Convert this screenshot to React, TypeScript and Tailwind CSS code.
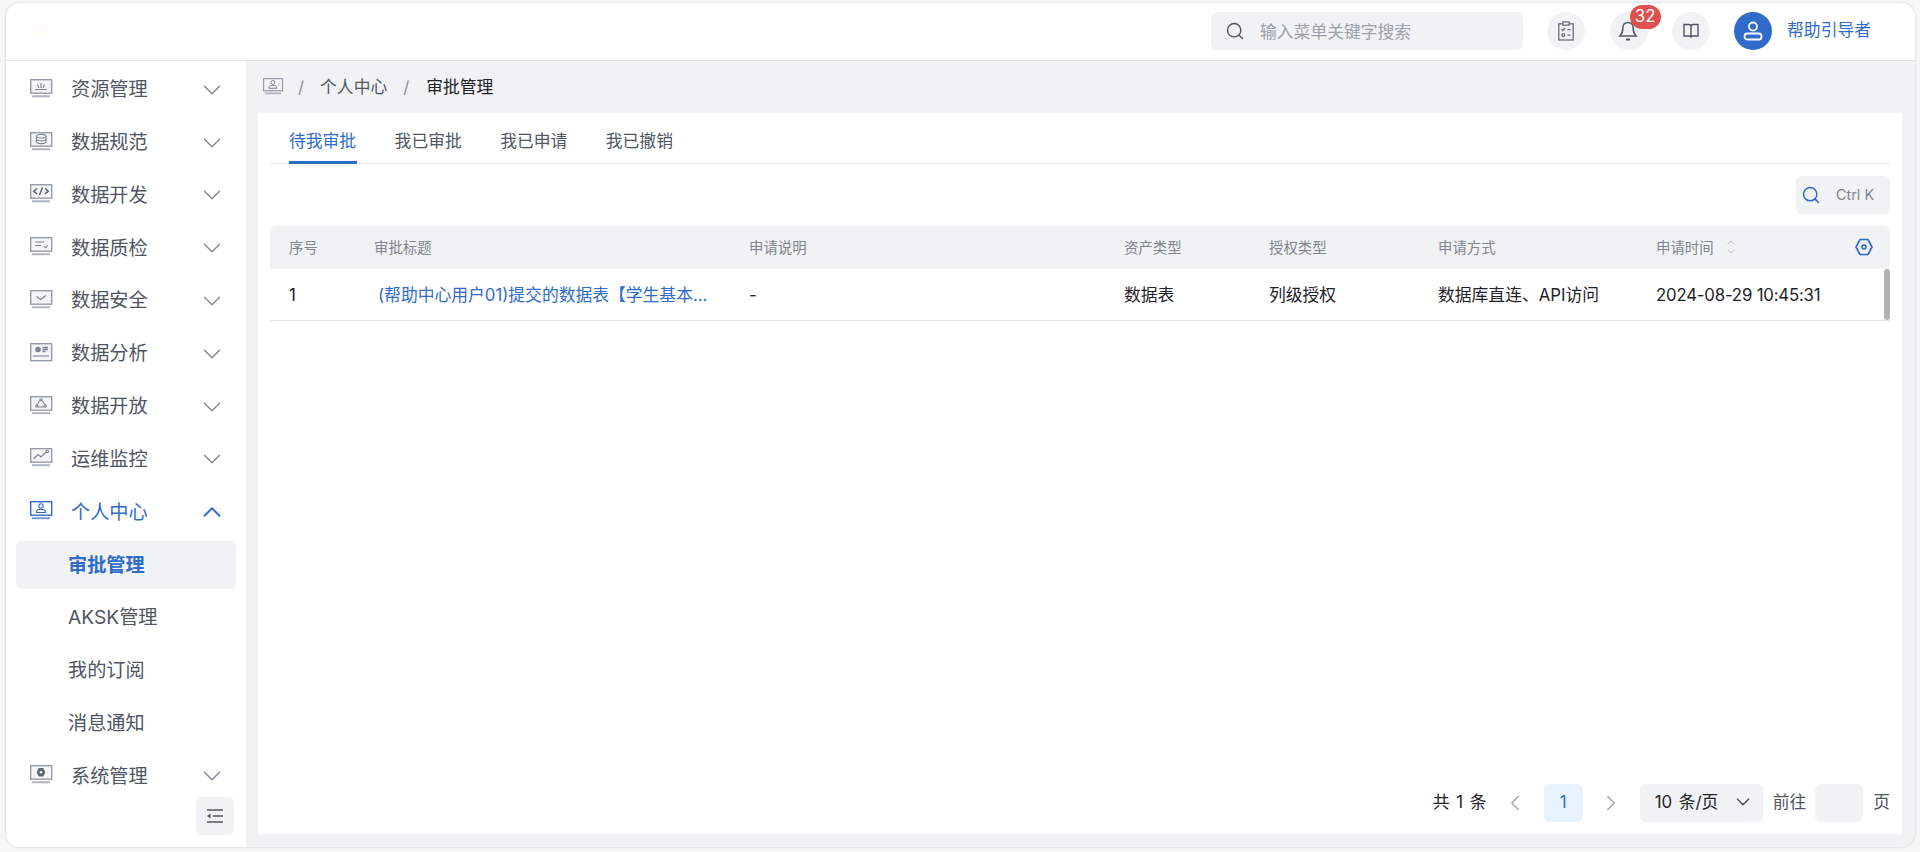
import React from "react";
import { ChevronDown, ChevronLeft, ChevronRight, ChevronUp, Search } from "lucide-react";

const font = "[font-family:Inter,'Noto_Sans_CJK_SC',sans-serif]";

// every nav icon is the same little monitor with a different glyph on the screen
const Screen = ({ children, active, tall }: { children?: React.ReactNode; active?: boolean; tall?: boolean }) => (
	<svg width="23" height="19" viewBox="0 0 23 19" fill="none" stroke={active ? "#2f6bc9" : "#969daa"} strokeWidth="1.4">
		<rect x="0.7" y="0.7" width="21" height={tall ? 17 : 13.5} fill={active ? "#fff" : "#f4f5f6"} />
		{tall ? (
			<path d="M3 13h16" strokeWidth="1.4" />
		) : (
			<path d="M2 17.2h18" strokeWidth="2" stroke={active ? "#6f9bdc" : "#b0b5bf"} />
		)}
		<g strokeWidth="1.1" stroke={active ? "#2f6bc9" : "#7b8494"}>{children}</g>
	</svg>
);

const UserGlyph = () => (
	<>
		<circle cx="11" cy="5" r="2.2" />
		<path d="M6.5 11.5c0-2 1.5-3 2.5-3h4c1 0 2.5 1 2.5 3z" />
	</>
);

const icons: Record<string, React.ReactNode> = {
	res: (
		<Screen>
			<path d="M5 10.5h12M11 4v5M7.5 5.5l1.5 3.5M14.5 5.5L13 9" />
		</Screen>
	),
	spec: (
		<Screen>
			<ellipse cx="11.2" cy="4.2" rx="4.8" ry="1.8" />
			<path d="M6.4 4.2v5.6c0 1 2.2 1.8 4.8 1.8s4.8-.8 4.8-1.8V4.2M6.4 7c0 1 2.2 1.8 4.8 1.8S16 8 16 7" />
		</Screen>
	),
	dev: (
		<Screen>
			<path d="M7 4.5L3.8 7.2 7 10M15 4.5l3.2 2.7L15 10M12.5 3.5l-3 7.5" strokeWidth="1.6" stroke="#5f6775" />
		</Screen>
	),
	check: (
		<Screen>
			<path d="M5 5h9M5 8.5h6M14 9.5l1.5 1.3 2.2-2.5" />
		</Screen>
	),
	safe: (
		<Screen>
			<path d="M6.5 6.5l4 3 5.5-4" strokeWidth="1.4" />
		</Screen>
	),
	chart: (
		<Screen tall>
			<circle cx="8" cy="6.5" r="2.8" fill="#7b8494" stroke="none" />
			<path d="M12.5 4.5h5.5M12.5 6.5h5.5M12.5 8.5h3" strokeWidth="1.3" />
		</Screen>
	),
	open: (
		<Screen>
			<circle cx="11" cy="3.8" r="1.1" />
			<circle cx="6.8" cy="10" r="1.1" />
			<circle cx="15.2" cy="10" r="1.1" />
			<path d="M9.5 5l-2.5 3.8M12.5 5l2.5 3.8M8.2 11h5.6" />
		</Screen>
	),
	ops: (
		<Screen>
			<path d="M3.5 11l4.5-4.5 3 2.5 5-5" />
			<circle cx="17.3" cy="3.5" r="1.2" />
		</Screen>
	),
	user: (
		<Screen active>
			<UserGlyph />
		</Screen>
	),
	sys: (
		<Screen>
			<path d="M8.8 3h4.4l2.2 4.2-2.2 4.2H8.8L6.6 7.2z" fill="#5f6775" stroke="none" />
			<circle cx="11" cy="7.2" r="1.3" fill="#f4f5f6" stroke="none" />
		</Screen>
	),
};

const NavItem = ({ icon, label, open }: { icon: string; label: string; open?: boolean }) => (
	<div className={`flex items-center h-[52.8px] pl-6 pr-[19px] ${open ? "text-[#2f6bc9]" : "text-[#4f5663]"}`}>
		<span className="w-[23px] h-[19px] -mt-[3px] shrink-0">{icons[icon]}</span>
		<span className="ml-[18px] text-[19.2px] flex-1 leading-none">{label}</span>
		{open ? (
			<ChevronUp size={30} strokeWidth={1.5} className="text-[#2f6bc9]" />
		) : (
			<ChevronDown size={30} strokeWidth={1.15} className="text-[#858c99]" />
		)}
	</div>
);

const SubItem = ({ label, active }: { label: string; active?: boolean }) => (
	<div className="h-[52.8px] px-2.5 flex items-center">
		<div
			className={`w-[222px] h-12 rounded-md flex items-center pl-[52px] text-[19.2px] ${
				active ? "bg-[#f1f2f4] text-[#2f6bc9] font-bold" : "text-[#4f5663]"
			}`}
		>
			{label}
		</div>
	</div>
);

const Sidebar = () => (
	<aside className="relative w-[240px] shrink-0 bg-white rounded-bl-[14px] pt-[2.5px] overflow-hidden">
		<NavItem icon="res" label="资源管理" />
		<NavItem icon="spec" label="数据规范" />
		<NavItem icon="dev" label="数据开发" />
		<NavItem icon="check" label="数据质检" />
		<NavItem icon="safe" label="数据安全" />
		<NavItem icon="chart" label="数据分析" />
		<NavItem icon="open" label="数据开放" />
		<NavItem icon="ops" label="运维监控" />
		<NavItem icon="user" label="个人中心" open />
		<SubItem label="审批管理" active />
		<SubItem label="AKSK管理" />
		<SubItem label="我的订阅" />
		<SubItem label="消息通知" />
		<NavItem icon="sys" label="系统管理" />
		<button className="absolute right-3 bottom-3 w-[38px] h-[38px] rounded-md bg-[#f1f2f4] flex items-center justify-center">
			<svg width="18" height="14" viewBox="0 0 18 14" fill="none" stroke="#4f5663" strokeWidth="1.5">
				<path d="M1 1h16M7 7h10M1 13h16" />
				<path d="M4.5 4.5L1 7l3.5 2.5z" fill="#4f5663" stroke="none" />
			</svg>
		</button>
	</aside>
);

const RoundIcon = ({ children }: { children: React.ReactNode }) => (
	<div className="relative w-[38px] h-[38px] rounded-full bg-[#f1f2f4] flex items-center justify-center">{children}</div>
);

const Header = () => (
	<header className="h-[58px] shrink-0 bg-white border-b border-[#e3e5e8] rounded-t-[14px] flex items-center pl-[29px] pr-[44px] pb-[1px]">
		<svg width="12" height="12" viewBox="0 0 12 12" fill="none">
			<circle cx="6" cy="6" r="4.5" stroke="#fef8f0" strokeWidth="2.5" />
		</svg>
		<div className="ml-auto w-[312px] h-[38px] rounded-md bg-[#f1f2f4] flex items-center pl-[14px] text-[#9aa1ad] text-[16.8px]">
			<Search size={20} strokeWidth={1.7} className="text-[#4f5663]" />
			<span className="ml-[15px] mt-[3px]">输入菜单关键字搜索</span>
		</div>
		<div className="ml-6 flex items-center gap-[24.5px]">
			<RoundIcon>
				<svg width="18" height="20" viewBox="0 0 20 22" fill="none" stroke="#6b7280" strokeWidth="1.5">
					<rect x="2" y="3" width="16" height="18" />
					<rect x="6.5" y="1" width="7" height="3.5" fill="#f1f2f4" />
					<path d="M5 9l1.5 1.5L9 8M11.5 9.5H15M11.5 15.5H15" />
					<circle cx="7" cy="15.5" r="1.6" />
				</svg>
			</RoundIcon>
			<RoundIcon>
				<svg width="20" height="22" viewBox="0 0 20 22" fill="none" stroke="#4f5663" strokeWidth="1.5" className="mr-[2px]">
					<path d="M10 2.5c-3.5 0-5.2 2.7-5.2 5.8 0 3.7-1.2 6-2.8 7.7h16c-1.6-1.7-2.8-4-2.8-7.7 0-3.1-1.7-5.8-5.2-5.8z" />
					<path d="M8 19.5h4" strokeWidth="2" />
				</svg>
				<span className="absolute -top-[7px] left-[20px] w-[31px] h-6 rounded-full bg-[#dd524f] text-white text-[16.8px] flex items-center justify-center">
					32
				</span>
			</RoundIcon>
			<RoundIcon>
				<svg width="16" height="16" viewBox="0 0 16 16" fill="none" stroke="#4f5663" strokeWidth="1.4">
					<path d="M1 1.5h5c1.2 0 2 .8 2 2v11c0-.8-.8-1.5-2-1.5H1zM15 1.5h-5c-1.2 0-2 .8-2 2v11c0-.8.8-1.5 2-1.5h5z" />
				</svg>
			</RoundIcon>
		</div>
		<div className="ml-6 w-[38px] h-[38px] rounded-full bg-[#2f6bc9] flex items-center justify-center">
			<svg width="20" height="20" viewBox="0 0 20 20" fill="none" stroke="#fff" strokeWidth="1.8">
				<circle cx="10" cy="5.5" r="4" />
				<rect x="1.5" y="12.5" width="17" height="6" rx="2.8" />
			</svg>
		</div>
		<span className="ml-[15px] text-[16.8px] text-[#2f6bc9]">帮助引导者</span>
	</header>
);

const Breadcrumb = () => (
	<div className="h-[52px] shrink-0 flex items-center pl-[5px] pt-[2px] text-[16.8px] text-[#4f5663]">
		<span className="w-[20px] h-[19px] -mt-[3px] scale-90 origin-left">
			<Screen>
				<UserGlyph />
			</Screen>
		</span>
		<span className="ml-[15px] text-[#8a8f98]">/</span>
		<span className="ml-[16px]">个人中心</span>
		<span className="ml-[16px] text-[#8a8f98]">/</span>
		<span className="ml-[17px] text-[#1f2329]">审批管理</span>
	</div>
);

const Tabs = () => (
	<div className="h-[51px] mx-3 border-b-[1.5px] border-[#e5e7ea] flex text-[16.8px] text-[#4f5663]">
		{["待我审批", "我已审批", "我已申请", "我已撤销"].map((t, i) => (
			<div key={t} className="w-[105.6px] px-[19px] h-[51px]">
				<div
					className={`h-[51px] pt-4 leading-6 ${
						i === 0 ? "text-[#2f6bc9] border-b-[3px] border-[#2f6bc9]" : ""
					}`}
				>
					{t}
				</div>
			</div>
		))}
	</div>
);

const cols = "grid grid-cols-[85px_375px_375px_145px_169px_218px_1fr] items-center";

const Table = () => (
	<div className="mx-3 mt-3 relative">
		<div className={`${cols} h-[43px] bg-[#f1f2f4] rounded-t-md text-[14.4px] text-[#80858e]`}>
			<span className="pl-[19px]">序号</span>
			<span className="pl-[19px]">审批标题</span>
			<span className="pl-[19px]">申请说明</span>
			<span className="pl-[19px]">资产类型</span>
			<span className="pl-[19px]">授权类型</span>
			<span className="pl-[19px]">申请方式</span>
			<span className="pl-[19px] flex items-center justify-between pr-[17px]">
				<span className="flex items-center gap-3">
					申请时间
					<svg width="10" height="16" viewBox="0 0 10 16" fill="none" stroke="#c4c8ce" strokeWidth="1">
						<path d="M1.5 5.5L5 2l3.5 3.5M1.5 10.5L5 14l3.5-3.5" />
					</svg>
				</span>
				<svg width="18" height="20" viewBox="0 0 18 20" fill="none" stroke="#2f6bc9" strokeWidth="1.6">
					<path d="M5 2.5h8L17 10l-4 7.5H5L1 10z" strokeLinejoin="round" />
					<circle cx="9" cy="10" r="2" />
				</svg>
			</span>
		</div>
		<div className={`${cols} h-[52px] pt-[2px] border-b border-[#e5e7ea] text-[16.8px] text-[#1f2329]`}>
			<span className="pl-[19px]">1</span>
			<span className="pl-[23px] whitespace-nowrap text-[#2f6bc9]">(帮助中心用户01)提交的数据表【学生基本...</span>
			<span className="pl-[19px]">-</span>
			<span className="pl-[19px]">数据表</span>
			<span className="pl-[19px]">列级授权</span>
			<span className="pl-[19px]">数据库直连、API访问</span>
			<span className="pl-[19px] tracking-[-0.2px]">2024-08-29 10:45:31</span>
		</div>
		<div className="absolute right-0 top-[43px] w-[6px] h-[51px] rounded-full bg-[#b2b2b2]" />
	</div>
);

const Pagination = () => (
	<div className="mt-auto h-[50px] pb-3 pr-3 flex items-center justify-end text-[16.8px] text-[#4f5663]">
		<span className="text-[#1f2329] [word-spacing:2px]">共 1 条</span>
		<ChevronLeft size={26} strokeWidth={1.2} className="ml-[15px] text-[#9aa1ad]" />
		<span className="ml-4 w-[39px] h-[38px] rounded-md bg-[#e6f3fe] text-[#2f6bc9] flex items-center justify-center">1</span>
		<ChevronRight size={26} strokeWidth={1.2} className="ml-[15px] text-[#9aa1ad]" />
		<div className="ml-4 w-[123px] h-[38px] rounded-md bg-[#f1f2f4] flex items-center pl-[15px] text-[#1f2329] [word-spacing:2px]">
			10 条/页
			<ChevronDown size={22} strokeWidth={1.8} className="ml-[14px] -mt-[2px] text-[#4f5663]" />
		</div>
		<span className="ml-[10px]">前往</span>
		<div className="ml-[9px] w-[48px] h-[38px] rounded-md bg-[#f1f2f4]" />
		<span className="ml-[10px]">页</span>
	</div>
);

export default function App() {
	return (
		<div className={`w-[1920px] h-[852px] bg-[#f7f7f7] pl-1.5 pt-[3px] overflow-hidden ${font}`}>
			<div className="w-[1909px] h-[844px] rounded-[14px] bg-[#f1f2f4] shadow-[0_0_3px_rgba(0,0,0,0.18)] flex flex-col">
				<Header />
				<div className="flex flex-1 min-h-0">
					<Sidebar />
					<main className="flex-1 min-w-0 flex flex-col pl-3 pr-[13px] pb-[13px]">
						<Breadcrumb />
						<section className="flex-1 min-h-0 bg-white flex flex-col">
							<Tabs />
							<div className="mx-3 mt-3 flex justify-end">
								<div className="w-[94px] h-[38px] rounded-md bg-[#f1f2f4] flex items-center pl-[5px] text-[14.4px] text-[#80858e]">
									<Search size={20} strokeWidth={1.8} className="text-[#2f6bc9]" />
									<span className="ml-[15px]">Ctrl K</span>
								</div>
							</div>
							<Table />
							<Pagination />
						</section>
					</main>
				</div>
			</div>
		</div>
	);
}
